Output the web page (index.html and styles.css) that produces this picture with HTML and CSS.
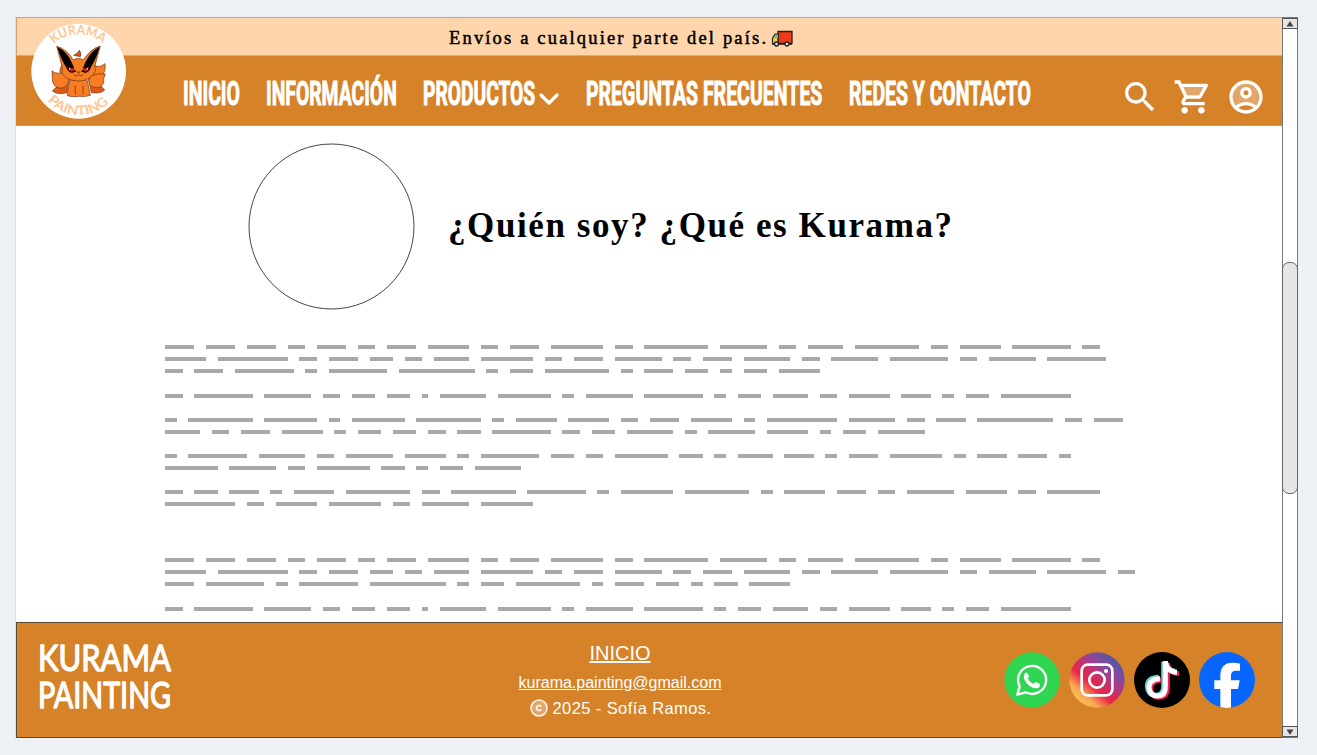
FILE: index.html
```html
<!DOCTYPE html>
<html lang="es">
<head>
<meta charset="utf-8">
<title>Kurama Painting</title>
<link rel="stylesheet" href="styles.css">
</head>
<body>
<div class="window">
  <div class="page">
    <header class="header">
      <div class="banner">
        <svg class="banner-text" width="320" height="30"><text x="0" y="21" textLength="317">Envíos a cualquier parte del país.</text></svg>
        <svg class="truck" width="22" height="18" viewBox="0 0 22 18">
          <path d="M7 1.5h14v12H7z" fill="#f03a17" stroke="#222" stroke-width="1.3"/>
          <path d="M7 4H4L1.5 8.5v5H7z" fill="#ffc83d" stroke="#222" stroke-width="1.2"/>
          <path d="M3 8l1.5-3H7v3z" fill="#26c6f5"/>
          <path d="M1 14h20" stroke="#222" stroke-width="1.6"/>
          <circle cx="5.5" cy="14" r="2" fill="#ddd" stroke="#222" stroke-width="1.3"/>
          <circle cx="16" cy="14" r="2" fill="#ddd" stroke="#222" stroke-width="1.3"/>
        </svg>
      </div>
      <nav class="nav">
        <svg class="link" width="58" height="40"><text y="33" transform="scale(.6 1)" textLength="95" lengthAdjust="spacingAndGlyphs">INICIO</text></svg>
        <svg class="link" width="132" height="40"><text y="33" transform="scale(.6 1)" textLength="218" lengthAdjust="spacingAndGlyphs">INFORMACIÓN</text></svg>
        <div class="menu">
          <svg class="link" width="113" height="40"><text y="33" transform="scale(.6 1)" textLength="187" lengthAdjust="spacingAndGlyphs">PRODUCTOS</text></svg>
          <svg class="chevron" width="22" height="14" viewBox="0 0 22 14"><path d="M3 3l8 8 8-8" fill="none" stroke="#fff" stroke-width="3.200" stroke-linecap="round" stroke-linejoin="round"/></svg>
        </div>
        <svg class="link" width="238" height="40"><text y="33" transform="scale(.6 1)" textLength="394" lengthAdjust="spacingAndGlyphs">PREGUNTAS FRECUENTES</text></svg>
        <svg class="link" width="183" height="40"><text y="33" transform="scale(.6 1)" textLength="303" lengthAdjust="spacingAndGlyphs">REDES Y CONTACTO</text></svg>
        <div class="tools">
          <svg viewBox="0 0 24 24"><path d="M15.5 14h-.79l-.28-.27C15.41 12.59 16 11.11 16 9.5 16 5.91 13.09 3 9.5 3S3 5.91 3 9.5 5.91 16 9.5 16c1.61 0 3.09-.59 4.23-1.57l.27.28v.79l5 4.99L20.49 19l-4.99-5zm-6 0C7.01 14 5 11.99 5 9.5S7.01 5 9.5 5 14 7.01 14 9.5 11.99 14 9.5 14z"/></svg>
          <svg viewBox="0 0 24 24"><path opacity=".3" d="M15.55 11l2.76-5H6.16l2.37 5z"/><path d="M15.55 13c.75 0 1.41-.41 1.75-1.03l3.58-6.49c.37-.66-.11-1.48-.87-1.48H5.21l-.94-2H1v2h2l3.6 7.59-1.35 2.44C4.52 15.37 5.48 17 7 17h12v-2H7l1.1-2h7.45zM6.16 6h12.15l-2.76 5H8.53L6.16 6zM7 18c-1.1 0-1.99.9-1.99 2S5.9 22 7 22s2-.9 2-2-.9-2-2-2zm10 0c-1.1 0-1.99.9-1.99 2s.89 2 1.99 2 2-.9 2-2-.9-2-2-2z"/></svg>
          <svg viewBox="0 0 24 24"><path opacity=".3" fill-rule="evenodd" d="M12 4a8 8 0 0 0-6.14 13.12C7.55 15.8 9.68 15 12 15s4.45.8 6.14 2.12A8 8 0 0 0 12 4zm0 4a1.5 1.5 0 1 1 0 3 1.5 1.5 0 0 1 0-3z"/><path d="M12 2C6.48 2 2 6.48 2 12s4.48 10 10 10 10-4.48 10-10S17.52 2 12 2zM7.35 18.5C8.66 17.56 10.26 17 12 17s3.34.56 4.65 1.5C15.34 19.44 13.74 20 12 20s-3.34-.56-4.65-1.5zm10.79-1.38C16.45 15.8 14.32 15 12 15s-4.45.8-6.14 2.12C4.7 15.73 4 13.95 4 12c0-4.42 3.58-8 8-8s8 3.58 8 8c0 1.95-.7 3.73-1.86 5.12z"/><path d="M12 6c-1.93 0-3.5 1.57-3.5 3.5S10.07 13 12 13s3.5-1.57 3.5-3.5S13.93 6 12 6zm0 5c-.83 0-1.5-.67-1.5-1.5S11.17 8 12 8s1.5.67 1.5 1.5S12.83 11 12 11z"/></svg>
        </div>
      </nav>
      <svg class="logo" viewBox="0 0 318 318">
        <defs>
          <path id="arc-top" d="M86 78A112 112 0 0 1 240 82"/>
          <path id="arc-bottom" d="M68 248A125 125 0 0 0 258 247"/>
        </defs>
        <circle cx="161" cy="160" r="142" fill="#fff"/>
        <text class="logo-text"><textPath href="#arc-top" textLength="160" lengthAdjust="spacingAndGlyphs">KURAMA</textPath></text>
        <text class="logo-text"><textPath href="#arc-bottom" textLength="206" lengthAdjust="spacingAndGlyphs">PAINTING</textPath></text>
        <g fill="#f77c22" stroke="#6d3316" stroke-width="2" stroke-linejoin="round">
          <path d="M146 112Q158 108 163 97Q170 104 166 116z" fill="#d9560f"/>
          <path d="M111 140Q98 160 112 176L138 184L148 148z"/>
          <path d="M206 140Q222 152 240 137Q244 163 227 176Q215 185 202 182z"/>
          <path d="M131 180Q102 196 82 219Q96 231 126 224z" fill="#de5a18"/>
          <path d="M190 180L230 206L239 216Q229 228 199 224z" fill="#de5a18"/>
          <path d="M81 158Q90 168 109 165Q133 168 132 187Q128 209 106 211Q80 205 82 179z"/>
          <path d="M241 168Q219 165 203 172Q188 183 193 200Q204 211 224 208Q239 199 236 182z"/>
          <path d="M133 188Q161 178 187 188L196 232Q184 237 163 235Q139 238 127 233z"/>
          <path d="M112 148L95 85Q125 93 145 126Q160 116 175 126Q197 92 226 84L209 146Q216 155 207 167Q190 190 159 189Q128 188 113 169Q109 157 112 148z"/>
        </g>
        <path d="M97 87Q127 101 140 133L148 152L124 149Q107 122 97 87zM224 86Q195 101 181 133L173 152L197 149Q214 122 224 86z" fill="#000"/>
        <path d="M124 142l31 18-14 5q-17-4-17-23zM198 142l-31 18 14 5q17-4 17-23z" fill="#1b0806"/>
        <path d="M130 145l18 11-10 5zM192 145l-18 11 10 5z" fill="#f31529"/>
        <path d="M134 151v5M188 151v5" stroke="#fff" stroke-width="3"/>
        <path d="M157 162h8l-4 4zM146 170q8 8 14 0q8 8 15 0M151 203v26M174 203v26" fill="none" stroke="#7f3815" stroke-width="2.500"/>
      </svg>
    </header>

    <main class="main">
      <section class="intro">
        <svg class="portrait" viewBox="0 0 168 168"><circle cx="84.500" cy="84.500" r="82.500" fill="#fff" stroke="#444" stroke-width="1"/></svg>
        <svg class="title" width="506" height="60"><text x="0" y="40" textLength="504">¿Quién soy? ¿Qué es Kurama?</text></svg>
      </section>
      <section class="copy" id="copy"></section>
    </main>

    <footer class="footer">
      <svg class="wordmark" width="142" height="80">
        <text y="25" transform="scale(1 1.2)" textLength="133" lengthAdjust="spacingAndGlyphs">KURAMA</text>
        <text y="56" transform="scale(1 1.2)" textLength="133" lengthAdjust="spacingAndGlyphs">PAINTING</text>
      </svg>
      <div class="contact">
        <a class="home">INICIO</a>
        <a class="mail">kurama.painting@gmail.com</a>
        <div class="rights">
          <svg width="20" height="20" viewBox="0 0 20 20"><circle cx="10" cy="10" r="8" fill="#fff" fill-opacity=".3" stroke="#fff" stroke-opacity=".9" stroke-width="1.6"/><path d="M12.300 8.700A2.600 2.600 0 1 0 12.300 11.300" fill="none" stroke="#fff" stroke-width="1.500"/></svg>
          <span>2025 - Sofía Ramos.</span>
        </div>
      </div>
      <div class="social">
        <svg viewBox="0 0 168 168">
          <circle cx="84" cy="84" r="83" fill="#30d651"/>
          <path d="M40 128l7-25A42 42 0 1 1 65 121z" fill="none" stroke="#fff" stroke-width="7" stroke-linejoin="round"/>
          <path d="M69 62q-3-1-7 3-4 5-2 13 3 13 16 23 14 11 26 7 7-3 6-11-6-5-12-7-3 0-7 6-12-4-18-17 5-5 4-8z" fill="#fff"/>
        </svg>
        <svg viewBox="0 0 168 168">
          <defs><linearGradient id="ig" x1=".15" y1=".9" x2=".85" y2=".1"><stop offset="0" stop-color="#fdc455"/><stop offset=".17" stop-color="#f9a653"/><stop offset=".37" stop-color="#e9284a"/><stop offset=".5" stop-color="#d52b5b"/><stop offset=".7" stop-color="#974399"/><stop offset="1" stop-color="#4a58a8"/></linearGradient></defs>
          <circle cx="84" cy="84" r="83" fill="url(#ig)"/>
          <rect x="38" y="38" width="92" height="92" rx="18" fill="none" stroke="#fff" stroke-width="8"/>
          <circle cx="84" cy="84" r="23" fill="none" stroke="#fff" stroke-width="8"/>
          <circle cx="111" cy="57" r="6" fill="#fff"/>
        </svg>
        <svg viewBox="0 0 168 168">
          <circle cx="84" cy="84" r="84" fill="#000"/>
          <g fill="none" stroke-width="15">
            <path d="M74 76Q40 77 40 104Q42 129 64 130Q89 129 89 105V29Q94 55 123 57" stroke="#69c9d0"/>
            <path d="M82 84Q50 84 50 111Q53 135 74 136Q100 134 100 110V34Q105 63 135 65" stroke="#f52453"/>
            <path d="M78 80Q45 80 45 107Q48 131 69 132Q94 131 94 107V28Q99 59 129 61" stroke="#fff"/>
          </g>
        </svg>
        <svg viewBox="0 0 168 168">
          <defs><clipPath id="fb"><circle cx="84" cy="84" r="84"/></clipPath></defs>
          <circle cx="84" cy="84" r="84" fill="#0866ff"/>
          <path d="M64 169V111H46V85H64V72Q64 32 101 32Q114 32 123 35V56H111Q96 56 96 70V85H122L117 111H96V169z" fill="#fff" clip-path="url(#fb)"/>
        </svg>
      </div>
    </footer>
  </div>
  <div class="scrollbar">
    <div class="arrow"><svg width="8" height="6" viewBox="0 0 8 6"><path d="M4 0l3.500 5.500h-7z" fill="#444"/></svg></div>
    <div class="track"><div class="thumb"></div></div>
    <div class="arrow"><svg width="8" height="6" viewBox="0 0 8 6"><path d="M4 6L.5.5h7z" fill="#444"/></svg></div>
  </div>
</div>
<script src="copy.js"></script>
</body>
</html>
```
FILE: styles.css
```css
* { box-sizing: border-box; }
body {
  margin: 0;
  height: 755px;
  overflow: hidden;
  background: #edf1f6;
  font-family: "Liberation Sans", Arial, sans-serif;
  padding: 17px 19px 17px 16px;
}
svg { display: block; flex: none; overflow: visible; }
.window { display: flex; height: 721px; }
.page {
  display: flex;
  flex-direction: column;
  width: 1266px;
  background: #fff;
  box-shadow: -1px 0 0 #dcdfe4;
}
.header { position: relative; flex: none; }
.banner {
  display: flex;
  align-items: center;
  height: 39px;
  padding-left: 432px;
  background: #ffd6ab;
  border: 1px solid #d9a066;
  border-bottom-color: #e5a866;
  border-right: 0;
}
.banner-text { margin-bottom: -3px; }
.banner-text text { font: 18.500px "Liberation Serif", serif; stroke: #000; stroke-width: .5px; }
.truck { margin: 5px 0 0 2px; }
.nav {
  display: flex;
  align-items: flex-start;
  height: 70px;
  padding: 16px 0 0 166.500px;
  gap: 25.200px;
  background: #d58228;
  border-bottom: 1px solid #dd984e;
}
.link text { font: 700 32.300px/1 Roboto, sans-serif; fill: #fff; stroke: #fff; stroke-width: 1px; }
.menu { display: flex; width: 138px; }
.chevron { margin: 20px 0 0 2px; }
.tools { display: flex; gap: 13.300px; margin: 5px 0 0 62.200px; }
.tools svg { width: 40px; height: 40px; fill: #fff; }
.logo { position: absolute; left: 9px; top: 1px; width: 106px; height: 106px; }
.logo-text { font: bold 39px Lato, sans-serif; fill: #ffc590; }
.main { flex: 1; min-height: 0; overflow: hidden; }
.intro { display: flex; align-items: flex-start; padding: 16px 0 0 231px; gap: 33px; }
.portrait { width: 168px; height: 168px; }
.title { margin-top: 55px; }
.title text { font: bold 35px "Liberation Serif", serif; }
.copy { display: flex; flex-direction: column; padding: 35px 0 0 149px; }
.paragraph { display: flex; flex-direction: column; gap: 8px; margin-bottom: 20px; }
.paragraph.first { margin-bottom: 21px; }
.paragraph.last { margin-bottom: 52px; }
.line { display: flex; height: 4px; gap: 11.688px; }
.word { flex: none; background: #a9a9a9; }
.footer {
  display: flex;
  align-items: flex-start;
  flex: none;
  height: 116px;
  padding-left: 21px;
  background: #d58228;
  border: 1px solid #5b4730;
  border-right: 0;
  color: #fff;
}
.wordmark { margin-top: 18px; }
.wordmark text { font: 400 30px Lato, sans-serif; fill: #fff; stroke: #fff; stroke-width: 1.100px; stroke-linejoin: round; }
.contact { display: flex; flex-direction: column; align-items: center; width: 300px; margin: 18px 0 0 290px; }
.contact a { text-decoration: underline; }
.home { font-size: 20px; line-height: 24px; }
.mail { font-size: 16px; line-height: 20px; margin-top: 8px; }
.rights { display: flex; align-items: center; gap: 4px; height: 20px; margin-top: 5px; font-size: 16.500px; letter-spacing: .4px; }
.social { display: flex; gap: 9.300px; margin: 29px 0 0 233.500px; }
.social svg { width: 56px; height: 56px; }
.scrollbar { display: flex; flex-direction: column; width: 16px; background: #fff; border: 1px solid #777; }
.arrow { display: flex; flex: none; align-items: center; justify-content: center; height: 11px; margin: 0 -1px; background: #e6e6e6; border: 1px solid #555; }
.track { flex: 1; padding-top: 233px; }
.thumb { height: 232px; margin: 0 -1px; border: 1px solid #666; border-radius: 7px; background: #e6e6e6; }
```
FILE: copy.js
```js
// Placeholder copy: every number is a word length in characters.
const CHAR = 5.844;
const opening = "5 5 5 3 5 3 5 7 3 5 9 3 11 8 3 6 11 3 7 10 3";
const second = "3 10 8 3 4 4 1 8 9 2 8 10 2 4 6 3 7 5 2 4 12";
const paragraphs = [
  [opening, "7 12 3 5 4 3 6 9 3 5 8 3 5 8 3 8 10 3 8 10", "3 5 10 2 10 13 2 4 11 2 5 4 2 4 7"],
  [second],
  ["2 11 9 2 9 11 2 7 7 3 5 7 2 12 8 3 5 13 3 5", "6 3 5 7 2 4 4 3 4 10 3 4 8 2 8 7 2 4 8"],
  ["2 10 8 3 8 7 2 10 4 3 9 4 2 6 5 2 5 9 2 5 5 2", "9 8 3 9 4 2 4 8"],
  ["3 4 5 2 7 11 3 11 10 2 9 11 2 7 5 3 8 7 3 9", "12 3 7 9 3 8 9"],
  [opening, "7 12 3 5 4 3 6 9 3 5 8 3 5 8 3 8 10 3 8 10 3", "5 10 2 10 13 2 4 11 2 5 4 2 4 7"],
  [second]
];
const copy = document.getElementById("copy");
paragraphs.forEach((lines, i) => {
  const p = document.createElement("div");
  p.className = "paragraph" + (i === 0 || i === 5 ? " first" : i === 4 ? " last" : "");
  lines.forEach(words => {
    const line = document.createElement("div");
    line.className = "line";
    words.split(" ").forEach(n => {
      const word = document.createElement("span");
      word.className = "word";
      word.style.width = n * CHAR + "px";
      line.appendChild(word);
    });
    p.appendChild(line);
  });
  copy.appendChild(p);
});
```
